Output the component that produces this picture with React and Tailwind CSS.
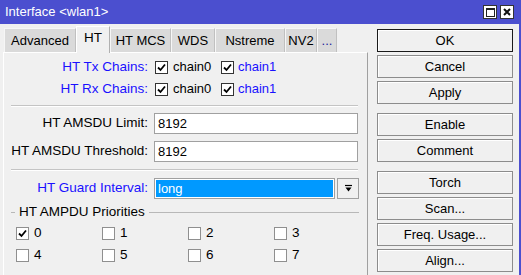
import { useState } from "react"

function Check ({ on, dark }) {
    return (
        <div className={"w-[13px] h-[13px] bg-white border flex items-center justify-center shrink-0 " + (dark ? "border-[#333333]" : "border-[#8f8f8f]")}>
            {on && (
                <svg width="9" height="9" viewBox="0 0 9 9">
                    <path d="M1 4.5 L3.5 7 L8 1.5" fill="none" stroke="#000" strokeWidth="1.8" />
                </svg>
            )}
        </div>
    )
}

function Btn ({ children, main, top }) {
    return (
        <div className={"h-[23px] flex items-center justify-center bg-[#f0f0f0] border shadow-[inset_1px_1px_0_#ffffff] " + (main ? "border-[#1a1a1a]" : "border-[#8c8c8c]") + " " + (top || "mt-[3px]")}>
            {children}
        </div>
    )
}

function Sep ({ mt }) {
    return <div className={"ml-[7px] mr-[9px] border-t border-[#c4c4c4] border-b border-b-white " + mt} />
}

const tabs = [
    { name: "Advanced", w: "w-[72px]" },
    { name: "HT", w: "w-[34px]", active: true },
    { name: "HT MCS", w: "w-[61px]" },
    { name: "WDS", w: "w-[44px]" },
    { name: "Nstreme", w: "w-[70px]" },
    { name: "NV2", w: "w-[32px]" },
    { name: "...", w: "w-[20px]", blue: true },
]

function App () {
    const [prio, setPrio] = useState([true, false, false, false, false, false, false, false])

    return (
        <div className="w-[521px] h-[275px] overflow-hidden bg-[#f0f0f0] flex flex-col font-['Liberation_Sans',Arial,sans-serif] text-[13px] text-black border-r-2 border-[#4b4fcf]">
            <div className="h-[24px] shrink-0 bg-[#4b4fcf] flex items-center pl-[5px] pr-[5px] text-white">
                <span>Interface &lt;wlan1&gt;</span>
                <div className="ml-auto flex gap-[3px]">
                    <div className="w-[14px] h-[14px] bg-white border border-[#333] flex items-center justify-center">
                        <div className="w-[9px] h-[9px] border border-t-2 border-[#222]" />
                    </div>
                    <div className="w-[14px] h-[14px] bg-white border border-[#333] flex items-center justify-center">
                        <svg width="8" height="8" viewBox="0 0 8 8">
                            <path d="M1 1 L7 7 M7 1 L1 7" stroke="#111" strokeWidth="2" />
                        </svg>
                    </div>
                </div>
            </div>

            <div className="flex flex-1 min-h-0">
                <div className="w-[368px] flex flex-col pt-[1px]">
                    <div className="h-[27px] flex items-end pl-[4px] shrink-0">
                        {tabs.map(t => (
                            <div key={t.name} className={t.w + " flex items-center justify-center " + (t.blue ? "text-[#22229a] " : "") + (t.active
                                ? "h-[27px] bg-[#f0f0f0] border-l border-t border-white border-r border-r-[#b0b0b0] mb-[-1px] relative z-10 pb-[3px] text-[13.5px]"
                                : "h-[24px] bg-[#dadada] border-l border-t border-[#f6f6f6] border-r border-r-[#c0c0c0]")}>
                                {t.name}
                            </div>
                        ))}
                    </div>

                    <div className="flex-1 ml-[3px] border-l border-t border-white border-r border-r-[#a0a0a0] flex flex-col pt-[3px]">
                        <div className="h-[22px] flex items-center">
                            <div className="w-[144px] text-right text-[#1a10ff] text-[13.5px]">HT Tx Chains:</div>
                            <div className="ml-[7px] flex items-center">
                                <Check on dark />
                                <span className="ml-[5px] w-[48px]">chain0</span>
                                <Check on dark />
                                <span className="ml-[4px] text-[#1a10ff]">chain1</span>
                            </div>
                        </div>
                        <div className="h-[22px] flex items-center">
                            <div className="w-[144px] text-right text-[#1a10ff] text-[13.5px]">HT Rx Chains:</div>
                            <div className="ml-[7px] flex items-center">
                                <Check on dark />
                                <span className="ml-[5px] w-[48px]">chain0</span>
                                <Check on dark />
                                <span className="ml-[4px] text-[#1a10ff]">chain1</span>
                            </div>
                        </div>

                        <Sep mt="mt-[5px]" />

                        <div className="h-[21px] flex items-center mt-[6px]">
                            <div className="w-[144px] text-right text-[13.5px]">HT AMSDU Limit:</div>
                            <div className="ml-[6px] w-[204px] h-[21px] bg-white border border-[#a0a0a0] flex items-center pl-[3px]">8192</div>
                        </div>
                        <div className="h-[21px] flex items-center mt-[7px]">
                            <div className="w-[144px] text-right text-[13.5px]">HT AMSDU Threshold:</div>
                            <div className="ml-[6px] w-[204px] h-[21px] bg-white border border-[#a0a0a0] flex items-center pl-[3px]">8192</div>
                        </div>

                        <Sep mt="mt-[7px]" />

                        <div className="h-[21px] flex items-center mt-[7px]">
                            <div className="w-[144px] text-right text-[#1a10ff] text-[13.5px]">HT Guard Interval:</div>
                            <div className="ml-[6px] w-[181px] h-[21px] bg-[#0099ff] border border-[#a0a0a0] shadow-[inset_0_0_0_1px_#ffffff] flex items-center pl-[3px] text-white">long</div>
                            <div className="ml-[2px] w-[22px] h-[21px] bg-[#f0f0f0] border border-[#a0a0a0] flex items-center justify-center">
                                <svg width="9" height="9" viewBox="0 0 9 9">
                                    <path d="M1 1.5 H8" stroke="#000" strokeWidth="1.2" />
                                    <path d="M1.5 3.5 H7.5 L4.5 7.5 Z" fill="#000" />
                                </svg>
                            </div>
                        </div>

                        <div className="h-[16px] flex items-center mt-[5px] ml-[7px] mr-[8px]">
                            <div className="w-[4px] border-t border-[#b8b8b8]" />
                            <span className="ml-[4px] mr-[4px] text-[13.5px]">HT AMPDU Priorities</span>
                            <div className="flex-1 border-t border-[#b8b8b8]" />
                        </div>

                        <div className="grid grid-cols-[86px_86px_86px_86px] pl-[12px] mt-[2px]">
                            {prio.map((p, i) => (
                                <div key={i} className="h-[22px] flex items-center" onClick={() => setPrio(prio.map((v, j) => j === i ? !v : v))}>
                                    <Check on={p} />
                                    <span className="ml-[5px] text-[13.5px]">{i}</span>
                                </div>
                            ))}
                        </div>
                    </div>
                </div>

                <div className="ml-[9px] w-[136px] flex flex-col pt-[5px]">
                    <Btn main top="mt-0">OK</Btn>
                    <Btn>Cancel</Btn>
                    <Btn>Apply</Btn>
                    <Btn top="mt-[9px]">Enable</Btn>
                    <Btn>Comment</Btn>
                    <Btn top="mt-[9px]">Torch</Btn>
                    <Btn>Scan...</Btn>
                    <Btn>Freq. Usage...</Btn>
                    <Btn>Align...</Btn>
                </div>
            </div>
        </div>
    )
}

export default App
